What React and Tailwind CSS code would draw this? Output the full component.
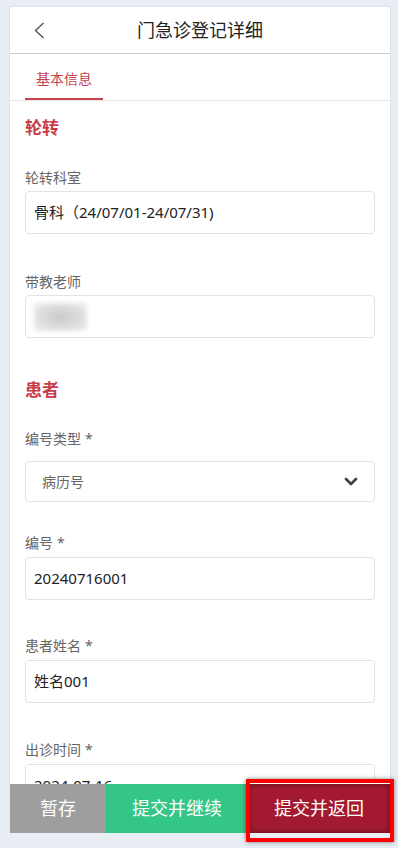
import React from "react";

const font = { fontFamily: '"Noto Sans", "Noto Sans CJK SC", sans-serif' };

function Label({ children, star, className = "" }) {
  return (
    <div className={"h-[20px] text-[14px] leading-[20px] text-[#666666] " + className}>
      {children}
      {star && <span className="ml-[4px]">*</span>}
    </div>
  );
}

function Input({ children, className = "" }) {
  return (
    <div
      className={
        "flex h-[43px] items-center rounded-[4px] border border-[#e3e3e3] px-[8px] text-[15px] text-[#222222] " +
        className
      }
    >
      {children}
    </div>
  );
}

function Section({ children, className = "" }) {
  return (
    <div className={"h-[24px] text-[17px] font-bold leading-[24px] text-[#c73e4a] " + className}>
      {children}
    </div>
  );
}

export default function App() {
  return (
    <div className="relative h-[848px] w-[398px] overflow-hidden bg-[#e9edf4]" style={font}>
      <div className="ml-[9px] mt-[6px] flex h-[827px] w-[382px] flex-col border-x border-t border-[#dde2ea] bg-white">
        {/* header */}
        <div className="grid h-[47px] shrink-0 grid-cols-[1fr_auto_1fr] items-center border-b border-[#cccccc]">
          <div className="pl-[24px]">
            <svg width="11" height="17" viewBox="0 0 11 17" fill="none">
              <polyline points="9.5,1 1.5,8.5 9.5,16" stroke="#555555" strokeWidth="1.4" />
            </svg>
          </div>
          <div className="text-[18px] leading-[24px] text-[#222222]">门急诊登记详细</div>
          <div />
        </div>
        {/* tabs */}
        <div className="flex h-[47px] shrink-0 border-b border-[#e6e6e6] pl-[15px]">
          <div className="flex h-full w-[78px] items-center justify-center border-b-2 border-[#c8414f] pt-[5px] text-[14px] text-[#c8414f]">
            基本信息
          </div>
        </div>
        {/* content */}
        <div className="min-h-0 flex-1 overflow-hidden px-[15px]">
          <Section className="mt-[15px]">轮转</Section>
          <Label className="mt-[28px]">轮转科室</Label>
          <Input className="mt-[3px]">骨科（24/07/01-24/07/31)</Input>
          <Label className="mt-[38px]">带教老师</Label>
          <Input className="mt-[3px]">
            <div className="h-[28px] w-[53px] bg-[radial-gradient(ellipse_at_center,#c9c9c9_0%,#dcdcdc_50%,#efefef_100%)] blur-[2px]" />
          </Input>
          <Section className="mt-[40px]">患者</Section>
          <Label star className="mt-[27px]">编号类型</Label>
          <div className="mt-[12px] flex h-[41px] items-center justify-between rounded-[4px] border border-[#e3e3e3] pl-[16px] pr-[16px] text-[14px] text-[#666666]">
            <span>病历号</span>
            <svg width="14" height="10" viewBox="0 0 14 10" fill="none">
              <polyline points="2,2 7,7 12,2" stroke="#444444" strokeWidth="2.8" strokeLinecap="round" strokeLinejoin="round" />
            </svg>
          </div>
          <Label star className="mt-[31px]">编号</Label>
          <Input className="mt-[4px]">20240716001</Input>
          <Label star className="mt-[36px]">患者姓名</Label>
          <Input className="mt-[4px]">姓名001</Input>
          <Label star className="mt-[37px]">出诊时间</Label>
          <Input className="mt-[4px]">2024-07-16</Input>
        </div>
        {/* bottom bar */}
        <div className="flex h-[49px] shrink-0 text-[18px] text-white">
          <div className="flex w-[96px] items-center justify-center bg-[#9e9e9e]">暂存</div>
          <div className="flex flex-1 items-center justify-center bg-[#33c687]">提交并继续</div>
          <div className="flex flex-1 items-center justify-center bg-[#a31a30] shadow-[inset_0_0_6px_rgba(0,0,0,0.45)]">
            提交并返回
          </div>
        </div>
      </div>
      <div className="pointer-events-none absolute left-[246px] top-[779px] h-[63px] w-[148px] border-[4px] border-[#ff0000] shadow-[0_0_4px_rgba(0,0,0,0.5)]" />
    </div>
  );
}
